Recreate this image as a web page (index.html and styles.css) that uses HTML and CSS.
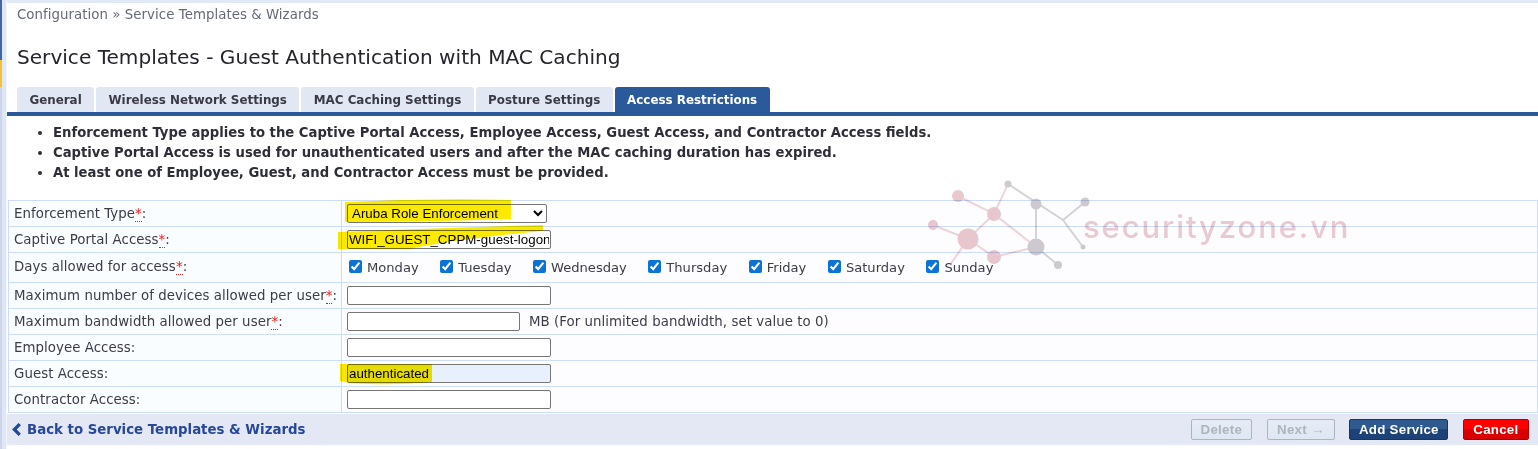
FILE: index.html
```html
<!DOCTYPE html>
<html lang="en">
<head>
<meta charset="utf-8">
<title>Service Templates - Guest Authentication with MAC Caching</title>
<link rel="stylesheet" href="styles.css">
</head>
<body>
<div class="shell">
  <div class="rail"><span class="rail-accent"></span></div>
  <main class="main">
    <div class="crumbs">Configuration » Service Templates &amp; Wizards</div>
    <h1 class="title">Service Templates - Guest Authentication with MAC Caching</h1>
    <nav class="tabs">
      <a class="tab">General</a>
      <a class="tab">Wireless Network Settings</a>
      <a class="tab">MAC Caching Settings</a>
      <a class="tab">Posture Settings</a>
      <a class="tab active">Access Restrictions</a>
    </nav>
    <ul class="notes">
      <li>Enforcement Type applies to the Captive Portal Access, Employee Access, Guest Access, and Contractor Access fields.</li>
      <li>Captive Portal Access is used for unauthenticated users and after the MAC caching duration has expired.</li>
      <li>At least one of Employee, Guest, and Contractor Access must be provided.</li>
    </ul>
    <table class="form">
      <tr><th>Enforcement Type<abbr>*</abbr>:</th>
        <td><select class="field select"><option>Aruba Role Enforcement</option></select></td></tr>
      <tr><th>Captive Portal Access<abbr>*</abbr>:</th>
        <td><input class="field" value="WIFI_GUEST_CPPM-guest-logon"></td></tr>
      <tr class="tall"><th>Days allowed for access<abbr>*</abbr>:</th>
        <td><div class="days">
          <label class="day"><input type="checkbox" checked>Monday</label>
          <label class="day"><input type="checkbox" checked>Tuesday</label>
          <label class="day"><input type="checkbox" checked>Wednesday</label>
          <label class="day"><input type="checkbox" checked>Thursday</label>
          <label class="day"><input type="checkbox" checked>Friday</label>
          <label class="day"><input type="checkbox" checked>Saturday</label>
          <label class="day"><input type="checkbox" checked>Sunday</label>
        </div></td></tr>
      <tr><th>Maximum number of devices allowed per user<abbr>*</abbr>:</th>
        <td><input class="field"></td></tr>
      <tr><th>Maximum bandwidth allowed per user<abbr>*</abbr>:</th>
        <td><input class="field short"><span class="hint">MB (For unlimited bandwidth, set value to 0)</span></td></tr>
      <tr><th>Employee Access:</th>
        <td><input class="field"></td></tr>
      <tr><th>Guest Access:</th>
        <td><input class="field filled" value="authenticated"></td></tr>
      <tr><th>Contractor Access:</th>
        <td><input class="field"></td></tr>
    </table>
    <footer class="bar">
      <a class="back"><svg class="chev" viewBox="0 0 10 12"><path d="M8 1 3 6l5 5" fill="none" stroke="currentColor" stroke-width="3"/></svg>Back to Service Templates &amp; Wizards</a>
      <div class="actions">
        <button class="btn off">Delete</button>
        <button class="btn off next">Next →</button>
        <button class="btn primary">Add Service</button>
        <button class="btn danger">Cancel</button>
      </div>
    </footer>
  </main>
</div>

<svg class="marker" viewBox="0 0 1538 449" aria-hidden="true">
  <path d="M345 202Q430 198 511 200V219Q430 222 345 222z"/>
  <path d="M338 232Q440 228 543 225V231Q450 240 410 249L338 249z"/>
  <path d="M340 364H432V382Q400 385 370 384Q350 384 340 381z"/>
</svg>

<svg class="mesh" viewBox="0 0 1538 449" aria-hidden="true">
  <g class="pink">
    <path class="ln" d="M958 196 994 214 1008 184M994 214 968 239 933 225M968 239 994 257 1036 247M968 239 950 265M994 214 1036 247"/>
    <circle cx="958" cy="196" r="6"/><circle cx="933" cy="225" r="5"/><circle cx="968" cy="239" r="10.5"/>
    <circle cx="994" cy="214" r="7"/><circle cx="994" cy="257" r="7"/>
  </g>
  <g class="grey">
    <path class="ln" d="M1008 184 1063 220 1085 202M1063 220 1083 247M1036 204V247L1058 265"/>
    <circle cx="1008" cy="184" r="3.5"/><circle cx="1036" cy="204" r="5.5"/><circle cx="1085" cy="202" r="4.5"/>
    <circle cx="1036" cy="247" r="8.5"/><circle cx="1058" cy="265" r="4"/><circle cx="1083" cy="247" r="2.5"/>
  </g>
</svg>
<div class="wm">securityzone.vn</div>
</body>
</html>
```

FILE: styles.css
```css
* { box-sizing: border-box; }
html, body { margin: 0; height: 100%; }
body {
  background: #fff;
  color: #333;
  font-family: "DejaVu Sans", Verdana, sans-serif;
  font-size: 13.33px;
  overflow: hidden;
  position: relative;
}
.shell { display: flex; height: 449px; }
.rail {
  width: 7px;
  flex: none;
  background: #dfe7f6;
  border-left: 2px solid #ccd4ea;
  border-right: 1px solid #f2f5fb;
  position: relative;
}
.rail-accent {
  position: absolute;
  left: -2px;
  top: 0;
  width: 2px;
  height: 87px;
  background: linear-gradient(#3f66a8 0 60px, #f2c230 60px);
}
.main { flex: 1; min-width: 0; border-top: 3px solid #e1e9f7; }
.crumbs { padding: 4px 0 0 10px; line-height: 15px; color: #666a78; letter-spacing: .05px; }
.title {
  margin: 0;
  padding: 20px 0 0 10px;
  font-size: 20.1px;
  font-weight: 400;
  line-height: 30px;
  color: #24242c;
}
.tabs {
  display: flex;
  gap: 2px;
  margin-top: 15px;
  padding-left: 10px;
  border-bottom: 4px solid #2a5a9a;
}
.tab {
  height: 25px;
  padding: 0 12.4px;
  display: flex;
  align-items: center;
  border-radius: 3px 3px 0 0;
  background: #e1e8f4;
  color: #3a3a46;
  font-size: 11.9px;
  font-weight: 700;
}
.tab.active { background: #2a5a9a; color: #fff; }
.notes {
  margin: 7px 0 0;
  padding: 0 0 0 46px;
  font-size: 13.2px;
  font-weight: 700;
  line-height: 20px;
  color: #2e2e38;
}
.form {
  width: calc(100% - 1px);
  margin: 17px 0 0 1px;
  border-collapse: collapse;
  background: #fdfdff;
}
.form th, .form td {
  height: 26px;
  padding: 0 0 0 5px;
  border: 1px solid #cddcf8;
  font-weight: 400;
  text-align: left;
  white-space: nowrap;
}
.form tr.tall th, .form tr.tall td { height: 30px; }
.form tr.tall th { padding-bottom: 3px; }
.form th { width: 333px; background: #fafdff; color: #3c3c48; letter-spacing: .06px; }
abbr { color: #f01818; border-bottom: 1px dotted #d02020; text-decoration: none; }
.field {
  display: inline-block;
  vertical-align: middle;
  width: 204px;
  height: 19px;
  padding: 0 1px;
  border: 1px solid #767676;
  border-radius: 2px;
  background: #fff;
  color: #000;
  font: 13.33px "Liberation Sans", Arial, sans-serif;
}
.select { width: 200px; padding-left: 0; }
.short { width: 173px; }
.filled { background: #e8f0fe; }
.hint { margin-left: 9px; vertical-align: middle; color: #3c3c48; letter-spacing: .05px; }
.days { display: flex; gap: 21.5px; padding: 0 0 0 2px; }
.day { display: flex; align-items: center; gap: 5px; color: #3c3c48; font-size: 13.1px; }
.day input { width: 13px; height: 13px; margin: 0 0 3px; accent-color: #0b72d8; }
.bar {
  height: 31px;
  margin-top: 1px;
  padding: 0 9px 0 4px;
  display: flex;
  align-items: center;
  justify-content: space-between;
  background: #e3e8f4;
}
.back { display: flex; align-items: center; gap: 5px; color: #27479a; font-size: 13.33px; font-weight: 700; }
.chev { width: 11px; height: 13px; }
.actions { display: flex; gap: 14.5px; }
.btn {
  height: 21px;
  padding: 0 9px;
  border: 1px solid #aab4c4;
  border-radius: 2px;
  font: 700 13.33px "Liberation Sans", Arial, sans-serif;
  letter-spacing: .25px;
}
.next { padding: 0 9.5px; }
.off { color: #b0b4bc; background: linear-gradient(#e6ecf5, #dfe7f3); }
.primary { padding: 0 8.5px; color: #fff; border-color: #16365f; background: linear-gradient(#2f5a90 0 50%, #1c4278 50%); }
.danger { padding: 0 9.5px; color: #fff; border-color: #b40000; background: linear-gradient(#ff0000 0 50%, #d80000 50%); }
.marker, .mesh { position: absolute; left: 0; top: 0; width: 1538px; height: 449px; pointer-events: none; }
.marker { mix-blend-mode: multiply; fill: #fbe900; }
.mesh { mix-blend-mode: multiply; }
.mesh .ln { fill: none; stroke-width: 2; }
.pink { fill: #e9c9cd; stroke: #eed6d8; }
.grey { fill: #d0cbcf; stroke: #d6d4d8; }
.pink circle, .grey circle { stroke: none; }
.wm {
  position: absolute;
  left: 1083px;
  top: 207px;
  color: #eaccd0;
  font: 500 31px/40px "Inter", sans-serif;
  letter-spacing: 1.9px;
  mix-blend-mode: multiply;
  pointer-events: none;
}
```
